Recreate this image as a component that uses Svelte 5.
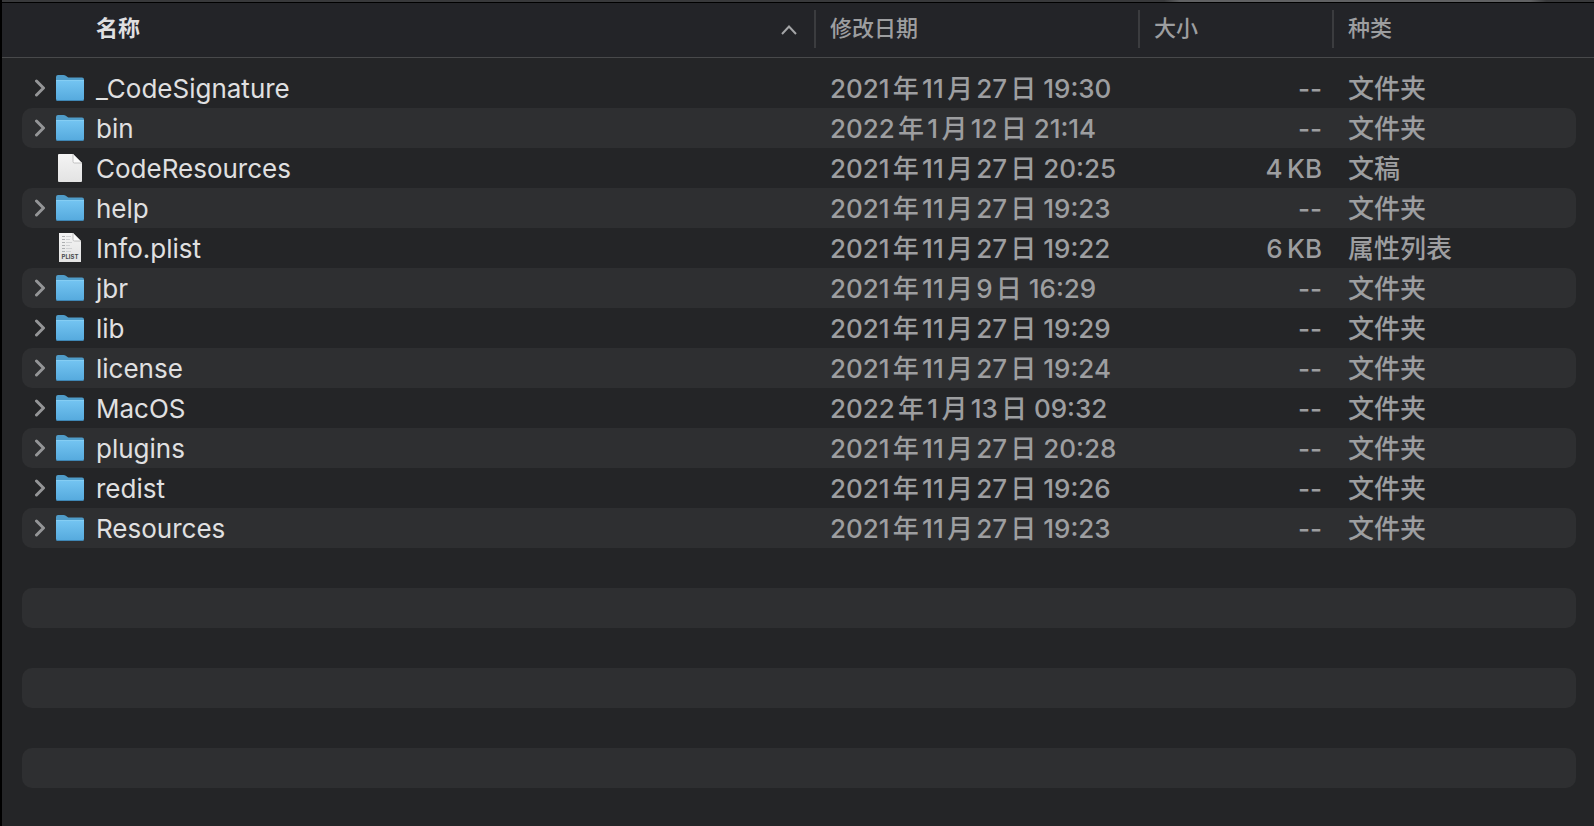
<script>
  const files = [
    { name: '_CodeSignature', date: '2021年11月27日 19:30', size: '--', kind: '文件夹', type: 'folder' },
    { name: 'bin', date: '2022年1月12日 21:14', size: '--', kind: '文件夹', type: 'folder' },
    { name: 'CodeResources', date: '2021年11月27日 20:25', size: '4\u2009KB', kind: '文稿', type: 'document' },
    { name: 'help', date: '2021年11月27日 19:23', size: '--', kind: '文件夹', type: 'folder' },
    { name: 'Info.plist', date: '2021年11月27日 19:22', size: '6\u2009KB', kind: '属性列表', type: 'plist' },
    { name: 'jbr', date: '2021年11月9日 16:29', size: '--', kind: '文件夹', type: 'folder' },
    { name: 'lib', date: '2021年11月27日 19:29', size: '--', kind: '文件夹', type: 'folder' },
    { name: 'license', date: '2021年11月27日 19:24', size: '--', kind: '文件夹', type: 'folder' },
    { name: 'MacOS', date: '2022年1月13日 09:32', size: '--', kind: '文件夹', type: 'folder' },
    { name: 'plugins', date: '2021年11月27日 20:28', size: '--', kind: '文件夹', type: 'folder' },
    { name: 'redist', date: '2021年11月27日 19:26', size: '--', kind: '文件夹', type: 'folder' },
    { name: 'Resources', date: '2021年11月27日 19:23', size: '--', kind: '文件夹', type: 'folder' }
  ];

  const fillerRows = 6;

  let ascending = $state(true);
  let open = $state({});
  let rows = $derived(ascending ? files : [...files].reverse());

  function toggle(name) {
    open[name] = !open[name];
  }
</script>

<div class="finder">
  <div class="strip"></div>
  <table>
    <thead>
      <tr>
        <th class="name" aria-sort={ascending ? 'ascending' : 'descending'}>
          <button onclick={() => (ascending = !ascending)}>
            <span>名称</span>
            <svg class="sort" class:down={!ascending} width="16" height="10" viewBox="0 0 16 10" aria-hidden="true">
              <path d="M1 9 8 1.5 15 9" />
            </svg>
          </button>
        </th>
        <th><button>修改日期</button></th>
        <th><button>大小</button></th>
        <th><button>种类</button></th>
      </tr>
    </thead>
    <tbody>
      {#each rows as file (file.name)}
        <tr>
          <td class="name">
            {#if file.type === 'folder'}
              <button class="disclosure" class:open={open[file.name]} aria-label={file.name} onclick={() => toggle(file.name)}>
                <svg width="10" height="18" viewBox="0 0 10 18">
                  <path d="M1.5 2 8.5 9 1.5 16" />
                </svg>
              </button>
            {:else}
              <span class="disclosure"></span>
            {/if}
            <svg class="icon" width="28" height="30" viewBox="0 0 28 30" aria-hidden="true">
              {#if file.type === 'folder'}
                <path d="M0 4Q0 2 2 2H7.5Q8.8 2 9.8 2.8L11.5 4Q12.2 4.5 13.5 4.5H26Q28 4.5 28 6.5V12H0Z" fill="#4f9cc9" />
                <path d="M0 7H28V26Q28 28 26 28H2Q0 28 0 26Z" fill="url(#folder)" />
                <path d="M0 7.5H28" stroke="#84cdf3" />
                <path d="M0 26Q0 28 2 28H26Q28 28 28 26Q28 27 26 27H2Q0 27 0 26Z" fill="#3f87b5" />
              {:else if file.type === 'document'}
                <path d="M3 1H17L26 10V28Q26 29 25 29H3Q2 29 2 28V2Q2 1 3 1Z" fill="url(#paper)" />
                <path d="M17 1 26 10H18.5Q17 10 17 8.5Z" fill="#fbfbfb" stroke="#b4b4b4" stroke-width="0.8" />
                <path d="M17.8 0.6 26.4 9.2" stroke="#242527" />
              {:else}
                <path d="M3 0H17L25 8V29H3Z" fill="url(#paper)" />
                <g stroke="#aeb0b2">
                  <path d="M6 3.5H9M6 6.5H9M6 9.5H9M6 12.5H9M6 15.5H9M6 18.5H9" />
                  <path d="M10 3.5H15M10 6.5H14M10 9.5H16M10 12.5H14M10 15.5H16M10 18.5H15" stroke="#d0d1d3" />
                </g>
                <path d="M17 0 25 8H18.5Q17 8 17 6.5Z" fill="#fbfbfb" stroke="#b4b4b4" stroke-width="0.8" />
                <text x="14" y="26" text-anchor="middle">PLIST</text>
              {/if}
            </svg>
            <span class="label">{file.name}</span>
          </td>
          <td>{file.date}</td>
          <td class="size">{file.size}</td>
          <td>{file.kind}</td>
        </tr>
      {/each}
      {#each Array(fillerRows) as _}
        <tr aria-hidden="true"><td></td></tr>
      {/each}
    </tbody>
  </table>
</div>

<svg class="defs" width="0" height="0" aria-hidden="true">
  <defs>
    <linearGradient id="folder" x1="0" y1="0" x2="0" y2="1">
      <stop offset="0" stop-color="#74c5f2" />
      <stop offset="1" stop-color="#55a9dd" />
    </linearGradient>
    <linearGradient id="paper" x1="0" y1="0" x2="0" y2="1">
      <stop offset="0" stop-color="#f4f4f4" />
      <stop offset="1" stop-color="#e3e3e3" />
    </linearGradient>
  </defs>
</svg>

<style>
  :global(body) {
    background: #242527;
  }

  .finder {
    box-sizing: border-box;
    min-height: 100vh;
    border-left: 2px solid #000;
    background: #242527;
    color: #9d9ea0;
    font-family: Inter, "Noto Sans CJK SC", sans-serif;
    font-size: 26px;
    line-height: 40px;
  }

  /* bottom edge of the toolbar above the list */
  .strip {
    height: 2px;
    border-bottom: 1px solid #000;
    background: linear-gradient(90deg, #38393b 73%, #606163 74%, #606163 96%, #38393b 97%);
  }

  table {
    display: block;
  }

  thead,
  tbody {
    display: block;
  }

  tr {
    display: grid;
    grid-template-columns: minmax(0, 1fr) 324px 194px 244px;
  }

  thead {
    padding: 7px 18px 9px 20px;
    border-bottom: 1px solid #48494b;
    background: #232428;
  }

  th {
    padding: 0;
    border-left: 2px solid #3b3c3f;
    font-weight: 500;
    text-align: left;
  }

  th.name {
    border-left: 0;
    color: #dfdfe0;
  }

  th button {
    display: flex;
    align-items: center;
    width: 100%;
    height: 38px;
    padding: 0 0 2px 14px;
    border: 0;
    background: none;
    color: inherit;
    font: inherit;
    font-size: 22px;
    line-height: 32px;
    text-align: left;
  }

  th.name button {
    justify-content: space-between;
    padding-left: 74px;
    padding-right: 17px;
    font-weight: 700;
  }

  .sort {
    margin-top: 4px;
    fill: none;
    stroke: #a4a5a7;
    stroke-width: 2;
  }

  .sort.down {
    transform: rotate(180deg);
  }

  tbody {
    padding: 10px 18px 0 20px;
  }

  tbody tr {
    height: 40px;
    border-radius: 10px;
  }

  tbody tr:nth-child(even) {
    background: #2e2f31;
  }

  td {
    padding: 1px 0 0 16px;
    font-weight: 500;
    line-height: 39px;
    white-space: nowrap;
    text-autospace: normal;
  }

  td.name {
    display: flex;
    align-items: center;
    padding: 0 0 0 8px;
    color: #e0e0e1;
    font-weight: 400;
  }

  td.size {
    padding-right: 10px;
    text-align: right;
  }

  .label {
    padding-top: 2px;
    line-height: 38px;
  }

  .disclosure {
    display: flex;
    align-items: center;
    justify-content: center;
    width: 20px;
    height: 38px;
    padding: 0;
    border: 0;
    background: none;
  }

  .disclosure svg {
    fill: none;
    stroke: #949597;
    stroke-width: 3;
    stroke-linecap: round;
    stroke-linejoin: round;
  }

  .disclosure.open svg {
    transform: rotate(90deg);
  }

  .icon {
    margin: 0 12px 0 6px;
  }

  .icon text {
    fill: #4a4b4d;
    font-size: 6px;
    font-weight: 700;
  }

  .defs {
    position: absolute;
  }
</style>
